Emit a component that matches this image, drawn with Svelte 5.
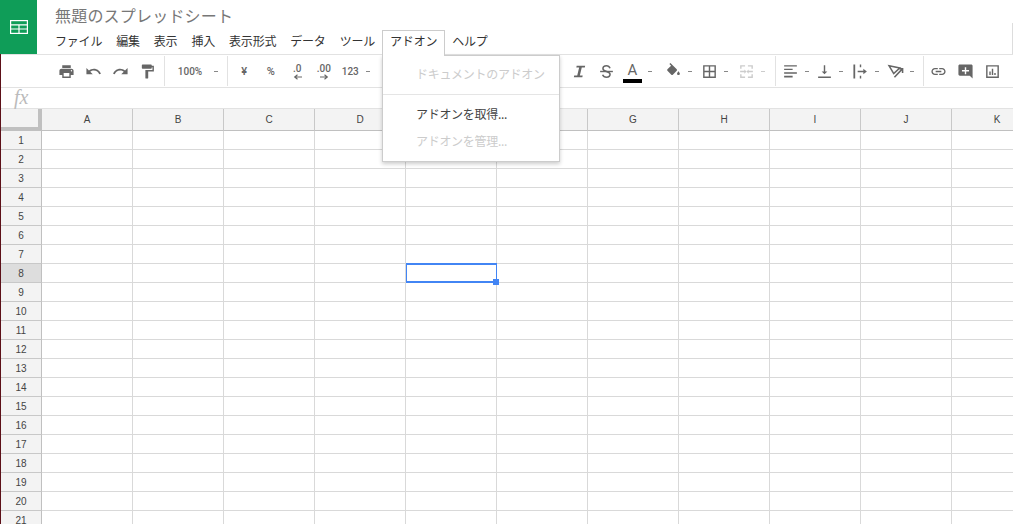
<script>
    const menus = ["ファイル", "編集", "表示", "挿入", "表示形式", "データ", "ツール"];
    const columns = ["A", "B", "C", "D", "E", "F", "G", "H", "I", "J", "K"];
    const rows = Array.from({ length: 21 }, (_, i) => i + 1);
</script>

<div class="sheet">
    <header class="top">
        <div class="logo">
            <svg width="18" height="14" viewBox="0 0 18 14" fill="none" stroke="#fff" stroke-width="1.2">
                <rect x="0.6" y="0.6" width="16.8" height="12.8" />
                <path d="M0.6 4.8H17.4M0.6 9H17.4M9 4.8V13.4" />
            </svg>
        </div>
        <div class="titles">
            <div class="title">無題のスプレッドシート</div>
            <nav class="menubar">
                {#each menus as m}
                    <div class="menu-item">{m}</div>
                {/each}
                <div class="menu-item open">アドオン</div>
                <div class="menu-item">ヘルプ</div>
            </nav>
        </div>
        <div class="edge"></div>
    </header>

    <div class="main">
        <div class="toolbar">
            <button class="btn" aria-label="print">
                <svg viewBox="0 0 24 24"><path d="M19 8H5c-1.66 0-3 1.34-3 3v6h4v4h12v-4h4v-6c0-1.66-1.34-3-3-3zm-3 11H8v-5h8v5zm3-7c-.55 0-1-.45-1-1s.45-1 1-1 1 .45 1 1-.45 1-1 1zm-1-9H6v4h12V3z" /></svg>
            </button>
            <button class="btn" aria-label="undo">
                <svg viewBox="0 0 24 24"><path d="M12.5 8c-2.65 0-5.05.99-6.9 2.6L2 7v9h9l-3.62-3.62c1.39-1.16 3.16-1.88 5.12-1.88 3.54 0 6.55 2.31 7.6 5.5l2.37-.78C21.08 11.03 17.15 8 12.5 8z" /></svg>
            </button>
            <button class="btn" aria-label="redo">
                <svg viewBox="0 0 24 24"><path d="M18.4 10.6C16.55 8.99 14.15 8 11.5 8c-4.65 0-8.58 3.03-9.96 7.22L3.9 16c1.05-3.19 4.05-5.5 7.6-5.5 1.95 0 3.73.72 5.12 1.88L13 16h9V7l-3.6 3.6z" /></svg>
            </button>
            <button class="btn" aria-label="paint format">
                <svg viewBox="0 0 24 24"><path d="M18 4V3c0-.55-.45-1-1-1H5c-.55 0-1 .45-1 1v4c0 .55.45 1 1 1h12c.55 0 1-.45 1-1V6h1v4H9v11c0 .55.45 1 1 1h2c.55 0 1-.45 1-1v-9h8V4h-3z" /></svg>
            </button>
            <span class="sep"></span>
            <span class="txt zoom">100%</span>
            <span class="dash"></span>
            <span class="sep wide"></span>
            <span class="txt fmt big">¥</span>
            <span class="txt fmt big">%</span>
            <span class="txt fmt dec">.0<svg class="arr" viewBox="0 0 8 5"><path d="M8 2.5H2M4 .5L1.5 2.5 4 4.5" /></svg></span>
            <span class="txt fmt dec">.00<svg class="arr" viewBox="0 0 8 5"><path d="M0 2.5H6M4 .5L6.5 2.5 4 4.5" /></svg></span>
            <span class="txt fmt">123</span>
            <span class="dash"></span>
            <span class="under-menu"></span>
            <button class="btn" aria-label="italic">
                <svg viewBox="0 0 24 24"><path d="M8 4h12l-.5 2.500h-4.300L12.500 17.500h4L16 20H4l.5-2.500h4.300L11.500 6.500h-4z" /></svg>
            </button>
            <button class="btn" aria-label="strikethrough">
                <svg viewBox="0 0 24 24"><path class="line" d="M17 7.500C16 5 14 4 12 4 9 4 7 5.500 7 8c0 5 10 3 10 8 0 2.500-2 4-5 4-2.500 0-4.500-1-5.500-3.500" /><path d="M3 11h18v2H3z" /></svg>
            </button>
            <span class="text-color">A</span>
            <span class="dash"></span>
            <button class="btn split fill" aria-label="fill color">
                <svg viewBox="0 0 24 24"><path d="M16.56 8.94L7.62 0 6.21 1.41l2.38 2.38-5.15 5.15c-.59.59-.59 1.540 0 2.120l5.500 5.500c.29.29.68.44 1.060.44s.77-.15 1.060-.44l5.500-5.500c.59-.58.59-1.530 0-2.120zM19 11.500s-2 2.170-2 3.500c0 1.100.9 2 2 2s2-.9 2-2c0-1.330-2-3.500-2-3.500z" /></svg>
            </button>
            <span class="dash"></span>
            <button class="btn split borders" aria-label="borders">
                <svg viewBox="0 0 24 24"><path d="M3 3v18h18V3H3zm8 16H5v-6h6v6zm0-8H5V5h6v6zm8 8h-6v-6h6v6zm0-8h-6V5h6v6z" /></svg>
            </button>
            <span class="dash"></span>
            <button class="btn split merge" aria-label="merge cells">
                <svg viewBox="0 0 24 24"><path d="M3 3h7v2H5v3H3zM14 3h7v5h-2V5h-5zM3 16h2v3h5v2H3zM19 16h2v5h-7v-2h5zM3 11h6V9l3 3-3 3v-2H3zM21 11h-6V9l-3 3 3 3v-2h6z" /></svg>
            </button>
            <span class="dash light"></span>
            <span class="sep last"></span>
            <button class="btn split align" aria-label="align">
                <svg viewBox="0 0 24 24"><path d="M3 3h18v2H3zM3 8h12v2H3zM3 13h18v2H3zM3 18h12v2.500H3z" /></svg>
            </button>
            <span class="dash"></span>
            <button class="btn split valign" aria-label="vertical align">
                <svg viewBox="0 0 24 24"><path d="M11 3h2v9h3l-4 4-4-4h3zM3 19h18v2H3z" /></svg>
            </button>
            <span class="dash"></span>
            <button class="btn split wrap" aria-label="text wrap">
                <svg viewBox="0 0 24 24"><path d="M2 2h2.500v20H2zM11 2h2v4h-2zM11 18h2v4h-2zM8 11h8V8l5 4-5 4v-3H8z" /></svg>
            </button>
            <span class="dash"></span>
            <button class="btn split rotate" aria-label="text rotation">
                <svg viewBox="0 0 24 24"><path class="line" d="M3 4L18 7 9.500 15zM10.500 20L21 9M16 8h6v6" /></svg>
            </button>
            <span class="dash"></span>
            <span class="sep after"></span>
            <button class="btn" aria-label="link">
                <svg viewBox="0 0 24 24"><path d="M3.900 12c0-1.710 1.390-3.100 3.100-3.100h4V7H7c-2.760 0-5 2.240-5 5s2.240 5 5 5h4v-1.900H7c-1.710 0-3.100-1.390-3.100-3.100zM8 13h8v-2H8v2zm9-6h-4v1.900h4c1.710 0 3.100 1.390 3.100 3.100s-1.390 3.100-3.100 3.100h-4V17h4c2.760 0 5-2.240 5-5s-2.240-5-5-5z" /></svg>
            </button>
            <button class="btn" aria-label="comment">
                <svg viewBox="0 0 24 24"><path d="M4 2h16c1.100 0 2 .9 2 2v18l-4-4H4c-1.100 0-2-.9-2-2V4c0-1.100.9-2 2-2zm7 4v4H7v2h4v4h2v-4h4v-2h-4V6z" fill-rule="evenodd" /></svg>
            </button>
            <button class="btn" aria-label="chart">
                <svg viewBox="0 0 24 24"><path d="M3 3v18h18V3zm2 2h14v14H5zM7.500 12h2v5h-2zM11 8h2v9h-2zM14.500 14h2v3h-2z" fill-rule="evenodd" /></svg>
            </button>
        </div>

        <div class="formula"><span class="fx">fx</span></div>

        <div class="grid">
            <div class="corner"></div>
            {#each columns as c}
                <div class="col-head">{c}</div>
            {/each}
            {#each rows as r}
                <div class="row-head" class:active={r === 8}>{r}</div>
                {#each columns as c}
                    <div class="cell">
                        {#if r === 8 && c === "E"}
                            <div class="selection"><span class="handle"></span></div>
                        {/if}
                    </div>
                {/each}
            {/each}
        </div>
    </div>

    <div class="dropdown">
        <div class="dd-item disabled doc">ドキュメントのアドオン</div>
        <div class="dd-sep"></div>
        <div class="dd-item get">アドオンを取得...</div>
        <div class="dd-item disabled manage">アドオンを管理...</div>
    </div>
</div>

<style>
    :global(body) {
        margin: 0;
        background: #fff;
    }
    .sheet {
        position: relative;
        width: 1013px;
        height: 524px;
        overflow: hidden;
        font-family: "Noto Sans CJK JP", "Noto Sans", sans-serif;
    }
    .top {
        display: flex;
        height: 54px;
    }
    .logo {
        width: 37px;
        background: #0f9d58;
        display: flex;
        align-items: center;
        justify-content: center;
    }
    .titles {
        padding-left: 11px;
    }
    .edge {
        width: 1px;
        height: 31px;
        margin-left: auto;
        align-self: flex-end;
        background: #ddd;
    }
    .title {
        height: 30px;
        padding: 4px 0 0 7px;
        box-sizing: border-box;
        font-size: 16px;
        line-height: 22px;
        letter-spacing: 0.2px;
        color: #777;
    }
    .menubar {
        display: flex;
        height: 24px;
    }
    .menu-item {
        padding: 0 6px;
        border: 1px solid transparent;
        border-bottom: 0;
        font-size: 12px;
        line-height: 20px;
        letter-spacing: -0.2px;
        color: #333;
        white-space: nowrap;
    }
    .menu-item.open {
        position: relative;
        z-index: 3;
        background: #fff;
        border-color: #ccc;
        height: 25px;
        padding: 0 7px;
    }
    .main {
        border-left: 1px solid #5c1018;
        height: 470px;
    }
    .toolbar {
        display: flex;
        align-items: center;
        height: 32px;
        padding-left: 52px;
        border-top: 1px solid #e2e2e2;
        border-bottom: 1px solid #e2e2e2;
        color: #666;
    }
    .btn {
        flex: none;
        width: 27px;
        height: 24px;
        padding: 0;
        border: 0;
        background: none;
        display: flex;
        align-items: center;
        justify-content: center;
    }
    .btn svg {
        width: 17px;
        height: 17px;
        fill: #666;
    }
    .btn svg .line {
        fill: none;
        stroke: #666;
        stroke-width: 2.2;
    }
    .sep {
        flex: none;
        width: 1px;
        height: 30px;
        margin: 0 3px;
        background: #e2e2e2;
    }
    .sep.wide {
        margin-left: 7px;
    }
    .txt {
        flex: none;
        font-family: Roboto, "Liberation Sans", sans-serif;
        font-size: 10px;
        font-weight: 500;
        text-align: center;
        color: #666;
    }
    .zoom {
        width: 44px;
    }
    .fmt {
        width: 26.5px;
        position: relative;
    }
    .fmt.big {
        font-size: 11px;
    }
    .dec {
        height: 18px;
        line-height: 13px;
    }
    .arr {
        position: absolute;
        left: 9px;
        top: 12px;
        width: 9px;
        height: 6px;
        fill: none;
        stroke: #666;
        stroke-width: 1;
    }
    .dash {
        flex: none;
        width: 8px;
        height: 1px;
        position: relative;
    }
    .dash::after {
        content: "";
        position: absolute;
        left: 2px;
        width: 4px;
        height: 1px;
        background: #888;
    }
    .dash.light::after {
        background: #ccc;
    }
    .under-menu {
        flex: none;
        width: 194px;
    }
    .text-color {
        flex: none;
        width: 26px;
        height: 22px;
        margin-bottom: -2px;
        position: relative;
        font-family: Roboto, "Liberation Sans", sans-serif;
        font-size: 15px;
        line-height: 18px;
        text-align: center;
        color: #666;
    }
    .text-color::after {
        content: "";
        position: absolute;
        left: 3px;
        bottom: 0;
        width: 19px;
        height: 4px;
        background: #000;
    }
    .split {
        width: 24px;
    }
    .fill {
        margin-left: 8px;
    }
    .borders {
        margin-left: 4px;
    }
    .merge {
        margin-left: 5px;
    }
    .merge svg {
        fill: #ccc;
    }
    .sep.last {
        margin: 0 3px 0 8px;
    }
    .valign {
        margin-left: 2px;
    }
    .wrap {
        margin-left: 4px;
    }
    .rotate {
        margin-left: 3px;
    }
    .sep.after {
        margin: 0 1px 0 7px;
    }
    .formula {
        height: 20px;
        border-bottom: 1px solid #e2e2e2;
        display: flex;
        align-items: center;
        padding-left: 13px;
    }
    .fx {
        font-family: "Liberation Serif", serif;
        font-style: italic;
        font-size: 20px;
        color: #bbb;
        line-height: 20px;
        margin-top: -3px;
    }
    .grid {
        display: grid;
        grid-template-columns: 41px repeat(11, 91px);
        grid-auto-rows: 19px;
        grid-template-rows: 22px;
        overflow: hidden;
        height: 415px;
        font-family: "Liberation Sans", sans-serif;
        font-size: 10px;
        color: #444;
    }
    .corner {
        background: #f3f3f3;
        border-right: 4px solid #c0c0c0;
        border-bottom: 4px solid #c0c0c0;
        box-sizing: border-box;
    }
    .col-head {
        background: #f3f3f3;
        border-right: 1px solid #c8c8c8;
        border-bottom: 1px solid #c0c0c0;
        display: flex;
        align-items: center;
        justify-content: center;
    }
    .row-head {
        background: #f3f3f3;
        border-right: 1px solid #c0c0c0;
        border-bottom: 1px solid #c8c8c8;
        display: flex;
        align-items: center;
        justify-content: center;
    }
    .row-head.active {
        background: #ddd;
    }
    .cell {
        position: relative;
        border-right: 1px solid #d9d9d9;
        border-bottom: 1px solid #d9d9d9;
    }
    .selection {
        position: absolute;
        left: 0;
        top: -1px;
        right: -1px;
        bottom: -1px;
        border: 1px solid #4285f4;
        border-top-width: 2px;
        border-bottom-width: 2px;
        z-index: 1;
    }
    .handle {
        position: absolute;
        right: -3px;
        bottom: -4px;
        width: 6px;
        height: 6px;
        background: #4285f4;
    }
    .dropdown {
        position: absolute;
        left: 382px;
        top: 55px;
        width: 178px;
        height: 107px;
        box-sizing: border-box;
        background: #fff;
        border: 1px solid #ccc;
        box-shadow: 0 2px 4px rgba(0, 0, 0, 0.2);
        z-index: 2;
        font-size: 12px;
        letter-spacing: -0.3px;
        color: #444;
    }
    .dd-item {
        padding-left: 33px;
        line-height: 20px;
    }
    .disabled {
        color: #ccc;
    }
    .doc {
        margin-top: 8px;
    }
    .dd-sep {
        height: 1px;
        margin-top: 10px;
        background: #e5e5e5;
    }
    .get {
        margin-top: 9px;
    }
    .manage {
        margin-top: 7px;
    }
</style>
